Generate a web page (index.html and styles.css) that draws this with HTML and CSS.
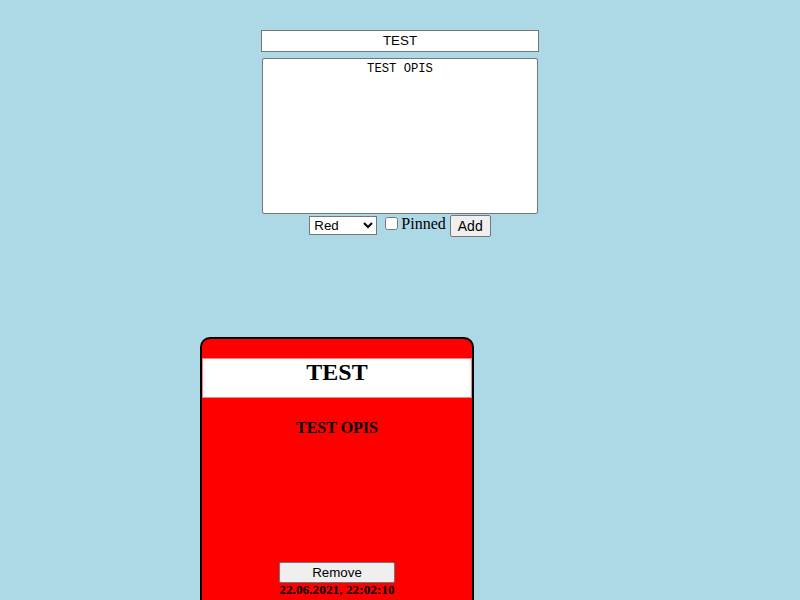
FILE: index.html
```html
<!DOCTYPE html>
<html>
<head>
<meta charset="utf-8">
<link rel="stylesheet" href="styles.css">
</head>
<body>
<div class="app">
  <form class="note-form">
    <input class="title-input" type="text" value="TEST">
    <textarea class="desc-input">TEST OPIS</textarea>
    <div class="controls"><select class="color-select"><option>Red</option><option>Green</option><option>Blue</option></select> <input class="pin-check" type="checkbox" id="pin"><label for="pin" class="pin-label">Pinned</label> <button type="button" class="btn btn-add">Add</button></div>
  </form>
  <div class="notes">
    <div class="card">
      <h2 class="card-title">TEST</h2>
      <h3 class="card-desc">TEST OPIS</h3>
      <div class="card-footer">
        <button type="button" class="btn btn-remove">Remove</button>
        <div class="card-date">22.06.2021, 22:02:10</div>
      </div>
    </div>
  </div>
</div>
</body>
</html>
```
FILE: styles.css
```css
html, body {
  margin: 0;
  padding: 0;
}
body {
  background: #add8e6;
  font-family: "Liberation Serif", "Times New Roman", serif;
  font-size: 16px;
  color: #000;
}
.app {
  padding-top: 30px;
}
.note-form {
  display: flex;
  flex-direction: column;
  align-items: center;
}
.title-input {
  box-sizing: border-box;
  width: 278px;
  height: 22px;
  margin: 0;
  padding: 0 2px 1px;
  border: 1px solid #767676;
  background: #fff;
  font-family: "Liberation Sans", Arial, sans-serif;
  font-size: 13.33px;
  text-align: center;
  color: #000;
}
.desc-input {
  box-sizing: border-box;
  width: 276px;
  height: 156px;
  margin: 6px 0 0;
  padding: 3px 2px 2px;
  border: 1px solid #767676;
  border-radius: 2px;
  background: #fff;
  font-family: "Liberation Mono", "Courier New", monospace;
  font-size: 12.2px;
  line-height: 15px;
  text-align: center;
  resize: none;
  color: #000;
}
.controls {
  height: 23px;
  text-align: center;
  line-height: 18px;
}
.color-select {
  box-sizing: border-box;
  width: 68px;
  height: 19px;
  margin: 2px 0 0;
  vertical-align: top;
  border: 1px solid #767676;
  background: #fff;
  font-family: "Liberation Sans", Arial, sans-serif;
  font-size: 13.33px;
  color: #000;
}
.pin-check {
  width: 13px;
  height: 13px;
  margin: 3px 3px 0 4px;
  vertical-align: top;
}
.pin-label {
  display: inline-block;
  vertical-align: top;
  margin-top: 1px;
  font-size: 16px;
}
.btn {
  box-sizing: border-box;
  margin: 0;
  padding: 1px 6px;
  border: 1px solid #767676;
  border-radius: 2px;
  background: #efefef;
  font-family: "Liberation Sans", Arial, sans-serif;
  font-size: 13.33px;
  color: #000;
}
.btn-add {
  height: 22px;
  margin-top: 1px;
  padding: 1px 7px;
  font-size: 14px;
  vertical-align: top;
}
.notes {
  margin-top: 100px;
  padding-left: 200px;
}
.card {
  box-sizing: border-box;
  width: 274px;
  height: 310px;
  border: 2px solid #000;
  border-radius: 10px;
  background: #ff0000;
  display: flex;
  flex-direction: column;
  align-items: center;
}
.card-title {
  box-sizing: border-box;
  width: 100%;
  height: 40px;
  margin: 19px 0 0;
  border: 1px solid #ff8080;
  background: #fff;
  font-size: 24px;
  font-weight: bold;
  text-align: center;
  line-height: 26px;
}
.card-desc {
  margin: 21px 0 0;
  font-size: 16px;
  font-weight: bold;
  line-height: 18px;
}
.card-footer {
  margin-top: 125px;
  display: flex;
  flex-direction: column;
  align-items: stretch;
}
.btn-remove {
  height: 21px;
  width: 100%;
}
.card-date {
  font-size: 13.33px;
  font-weight: bold;
  line-height: 13px;
  text-align: center;
}
```
